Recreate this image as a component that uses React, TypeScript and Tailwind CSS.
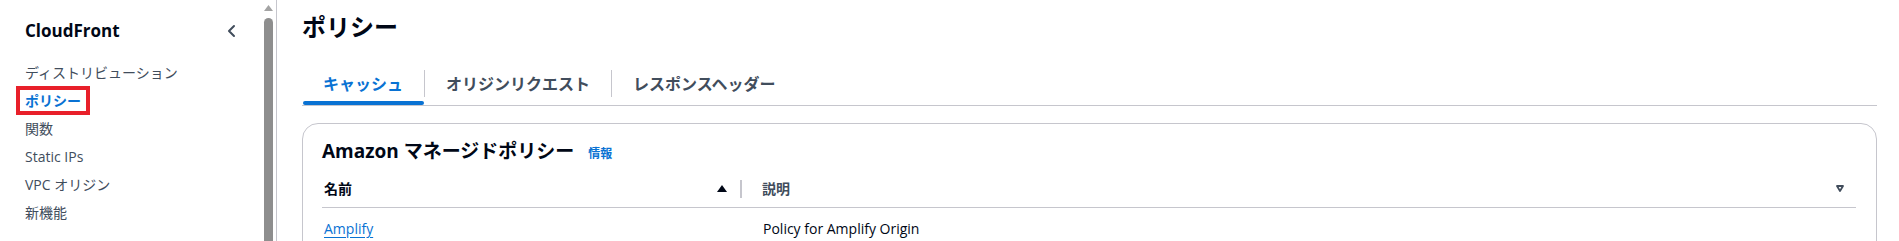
import React from "react";

const font = { fontFamily: '"Open Sans", "Noto Sans CJK JP", sans-serif' };

const navItems = ["ディストリビューション", "ポリシー", "関数", "Static IPs", "VPC オリジン", "新機能"];

const Sidebar = () => {
    return (
        <aside className="flex w-[277px] shrink-0 border-r border-[#c6c6cd]">
            <nav className="flex-1 pl-[25px] pt-[19px]">
                <div className="flex items-center justify-between pr-[25px]">
                    <h2 className="text-[17px] font-bold leading-[24px] text-[#000716]">CloudFront</h2>
                    <svg width="16" height="16" viewBox="0 0 16 16" fill="none">
                        <path d="M11 3 6 8l5 5" stroke="#414d5c" strokeWidth="2" strokeLinecap="round" strokeLinejoin="round" />
                    </svg>
                </div>
                <ul className="mt-[16px]">
                    {navItems.map((item) => (
                        <li key={item} className="text-[14px] leading-[28px]">
                            {item === "ポリシー" ? (
                                <span className="relative font-bold text-[#0972d3]">
                                    {item}
                                    <span className="absolute -left-[9px] -top-[5px] h-[29px] w-[74px] border-4 border-[#e8202a]" />
                                </span>
                            ) : (
                                <span className="text-[#414d5c]">{item}</span>
                            )}
                        </li>
                    ))}
                </ul>
            </nav>
            {/* scrollbar */}
            <div className="mr-[3px] flex w-[9px] flex-col items-center pt-[5px]">
                <svg width="9" height="6" viewBox="0 0 9 6">
                    <path d="M4.5 0 9 6H0z" fill="#a3a3a3" />
                </svg>
                <div className="mt-[7px] w-full flex-1 rounded-t-full bg-[#8e8e8e]" />
            </div>
        </aside>
    );
};

const tabs = ["キャッシュ", "オリジンリクエスト", "レスポンスヘッダー"];

const Main = () => {
    return (
        <main className="flex-1 pl-[25px] pr-[22px] pt-[12px]">
            <h1 className="text-[24px] font-bold leading-[30px] text-[#000716]">ポリシー</h1>
            <div className="mt-[20px] flex border-b border-[#c6c6cd]">
                {tabs.map((tab, i) => (
                    <div key={tab} className="flex items-center">
                        {i > 0 && <div className="h-[27px] w-px bg-[#c6c6cd]" />}
                        <div
                            className={`relative flex h-[43px] items-center px-[21px] text-[16px] font-bold ${
                                i === 0 ? "text-[#0972d3]" : "text-[#414d5c]"
                            }`}
                        >
                            {tab}
                            {i === 0 && (
                                <span className="absolute bottom-0 left-[1px] right-0 h-[4px] rounded-full bg-[#0972d3]" />
                            )}
                        </div>
                    </div>
                ))}
            </div>
            <section className="mt-[17px] h-[200px] rounded-[16px] border border-[#c6c6cd] pl-[19px] pr-[20px] pt-[15px]">
                <div className="flex items-baseline gap-[14px]">
                    <h2 className="text-[19px] font-bold leading-[24px] text-[#000716]">Amazon マネージドポリシー</h2>
                    <a className="text-[12px] font-bold text-[#0972d3]">情報</a>
                </div>
                <table className="mt-[8px] w-full border-collapse text-[14px]">
                    <thead>
                        <tr className="h-[36px] border-b border-[#c6c6cd]">
                            <th className="w-[420px] p-0 text-left">
                                <div className="flex items-center">
                                    <span className="flex-1 pl-[2px] font-bold text-[#000716]">名前</span>
                                    <svg width="10" height="7" viewBox="0 0 10 7" className="mr-[13px]">
                                        <path d="M5 0 10 7H0z" fill="#000716" />
                                    </svg>
                                    <span className="h-[18px] w-[2px] bg-[#c6c6cd]" />
                                </div>
                            </th>
                            <th className="p-0 text-left">
                                <div className="flex items-center">
                                    <span className="flex-1 pl-[20px] font-semibold text-[#414d5c]">説明</span>
                                    <svg width="8" height="7" viewBox="0 0 8 7" className="mr-[12px]">
                                        <path d="M1 1h6L4 6z" fill="none" stroke="#414d5c" strokeWidth="1.8" strokeLinejoin="round" />
                                    </svg>
                                </div>
                            </th>
                        </tr>
                    </thead>
                    <tbody>
                        <tr className="h-[42px]">
                            <td className="p-0 pl-[2px]">
                                <a className="text-[#0972d3] underline underline-offset-[3px]">Amplify</a>
                            </td>
                            <td className="p-0 pl-[21px] text-[#000716]">Policy for Amplify Origin</td>
                        </tr>
                    </tbody>
                </table>
            </section>
        </main>
    );
};

export default function App() {
    return (
        <div className="flex h-[241px] w-full overflow-hidden bg-white" style={font}>
            <Sidebar />
            <Main />
        </div>
    );
}
